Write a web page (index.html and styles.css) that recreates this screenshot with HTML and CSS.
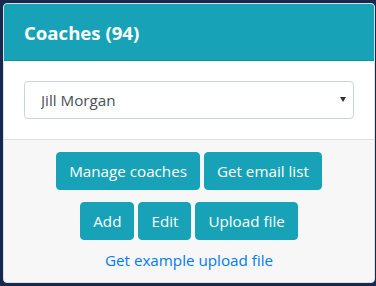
FILE: index.html
```html
<!DOCTYPE html>
<html lang="en">
<head>
  <meta charset="UTF-8" />
  <title>Coaches</title>
  <meta name="viewport" content="width=device-width, initial-scale=1" />
  <link rel="stylesheet" href="styles.css">
</head>
<body>

<div class="card">
  <div class="card-header">
    <h5>Coaches (94)</h5>
  </div>
  <div class="card-body">
    <div class="select-wrap">
      <select class="coach-select">
        <option>Jill Morgan</option>
      </select>
    </div>
  </div>
  <div class="card-footer">
    <div class="btn-row">
      <button class="btn">Manage coaches</button>
      <button class="btn">Get email list</button>
    </div>
    <div class="btn-row">
      <button class="btn">Add</button>
      <button class="btn">Edit</button>
      <button class="btn">Upload file</button>
    </div>
    <a href="#" class="example-link">Get example upload file</a>
  </div>
</div>

</body>
</html>
```

FILE: styles.css
```css
body {
  font-family: 'Open Sans', 'Noto Sans', sans-serif;
  font-size: 15px;
  background: #15284f;
  margin: 0;
  padding: 3px 1px 2px 3px;
}

.card {
  background: white;
  border: 1px solid #dfdfdf;
  border-radius: 4px;
  overflow: hidden;
}

.card-header {
  background: #17a2b8;
  color: white;
  padding: 12px 20px;
  height: 32px;
  border-bottom: 1px solid #1491a5;
  display: flex;
  align-items: center;
}

.card-header h5 {
  margin: 0;
  font-size: 18.6px;
  font-weight: 700;
}

.card-body {
  padding: 20px;
}

.select-wrap {
  position: relative;
}

.select-wrap::after {
  content: '';
  position: absolute;
  right: 8px;
  top: 16px;
  border-left: 3.5px solid transparent;
  border-right: 3.5px solid transparent;
  border-top: 5px solid #333;
}

.coach-select {
  width: 100%;
  height: 38px;
  appearance: none;
  -webkit-appearance: none;
  background: white;
  border: 1px solid #ced4da;
  border-radius: 4px;
  padding: 0 16px;
  font-family: inherit;
  font-size: 15.2px;
  color: #495057;
}

.card-footer {
  background: #f7f7f7;
  border-top: 1px solid #dfdfdf;
  padding: 12px 20px 10px;
  display: flex;
  flex-direction: column;
  align-items: center;
}

.btn-row {
  display: flex;
  gap: 4px;
  margin-bottom: 12px;
}

.btn-row + .btn-row {
  margin-bottom: 8px;
}

.btn {
  background: #17a2b8;
  color: white;
  border: 1px solid #17a2b8;
  border-radius: 4px;
  height: 38px;
  padding: 0 12px;
  font-family: inherit;
  font-size: 15.2px;
  cursor: pointer;
}

.example-link {
  color: #007bff;
  text-decoration: none;
  font-size: 15.2px;
  line-height: 24px;
}
```
